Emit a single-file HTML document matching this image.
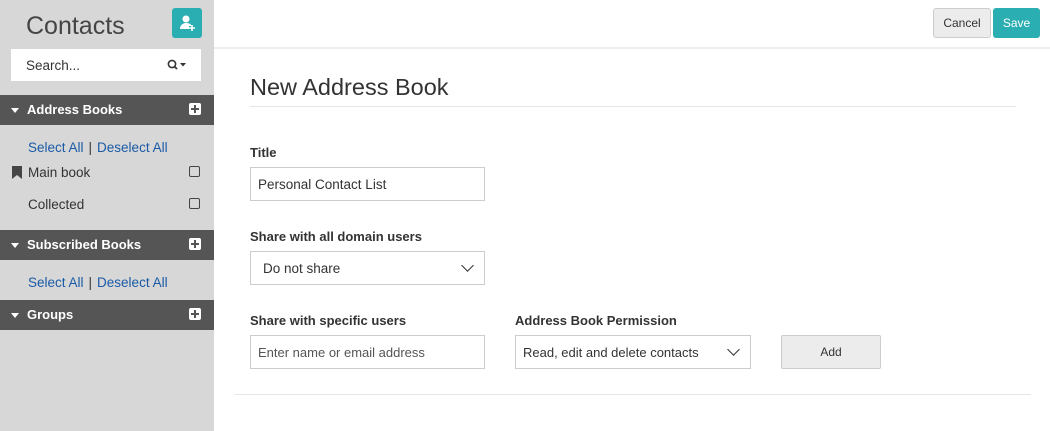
<!DOCTYPE html>
<html><head><style>
*{box-sizing:border-box;margin:0;padding:0}
body{width:1050px;height:431px;overflow:hidden;font-family:"Liberation Sans",sans-serif;background:#fff;position:relative;color:#333}
#side{position:absolute;left:0;top:0;width:214px;height:431px;background:#d7d7d7}
.abs{position:absolute}
.hdr{position:absolute;left:0;width:214px;height:30px;background:#555;color:#fff;font-weight:bold;font-size:13px;line-height:30px;padding-left:27px}
.hdr .tri{position:absolute;left:11px;top:13px;border-left:4px solid transparent;border-right:4px solid transparent;border-top:5px solid #fff}
.hdr .plus{position:absolute;left:189px;top:8px;width:12px;height:12px;background:#fff;border-radius:2px}
.hdr .plus:before{content:"";position:absolute;left:2px;top:5px;width:8px;height:2px;background:#555}
.hdr .plus:after{content:"";position:absolute;left:5px;top:2px;width:2px;height:8px;background:#555}
.sel{position:absolute;left:28px;font-size:13.5px;color:#1a5aa6}
.sel span{color:#333;margin:0 5px}
.item{position:absolute;left:28px;font-size:13.5px;color:#333}
.cb{position:absolute;left:189px;width:11px;height:11px;border:1.5px solid #444;border-radius:2px}
.lbl{position:absolute;font-size:13px;font-weight:bold;color:#333}
.inp{position:absolute;height:34px;border:1px solid #ccc;background:#fff;font-size:13.5px;line-height:33px;padding-left:7px;color:#333}
.chev{position:absolute;right:12px;top:11px;width:9px;height:9px;border-right:1.6px solid #333;border-bottom:1.6px solid #333;transform:rotate(45deg)}
</style></head><body>
<div id="side">
 <div class="abs" style="left:26px;top:12px;font-size:25px;color:#444">Contacts</div>
 <div class="abs" style="left:172px;top:8px;width:30px;height:30px;background:#2aaeb1;border-radius:3px">
  <svg width="30" height="30" viewBox="0 0 30 30"><circle cx="14" cy="11" r="3.5" fill="#fff"/><path d="M8 21c0-4 3-6 6-6s5 1 5.5 3H17v3z" fill="#fff"/><path d="M20 17v6M17 20h6" stroke="#fff" stroke-width="1.6"/></svg>
 </div>
 <div class="abs" style="left:11px;top:49px;width:190px;height:32px;background:#fff;font-size:13.5px;line-height:33px;padding-left:15px;color:#333">Search...
  <svg class="abs" style="left:156px;top:10px" width="22" height="12" viewBox="0 0 22 12"><circle cx="5" cy="5" r="3.6" fill="none" stroke="#333" stroke-width="1.6"/><path d="M7.5 7.5l2.5 2.5" stroke="#333" stroke-width="1.8"/><path d="M13 4h6l-3 3.5z" fill="#333"/></svg>
 </div>
 <div class="hdr" style="top:95px"><i class="tri"></i>Address Books<i class="plus"></i></div>
 <div class="sel" style="top:140px">Select All<span>|</span>Deselect All</div>
 <svg class="abs" style="left:12px;top:166px" width="10" height="13"><path d="M0 0h10v13l-5-4-5 4z" fill="#444"/></svg>
 <div class="item" style="top:165px">Main book</div><div class="cb" style="top:166px"></div>
 <div class="item" style="top:197px">Collected</div><div class="cb" style="top:198px"></div>
 <div class="hdr" style="top:230px"><i class="tri"></i>Subscribed Books<i class="plus"></i></div>
 <div class="sel" style="top:275px">Select All<span>|</span>Deselect All</div>
 <div class="hdr" style="top:300px"><i class="tri"></i>Groups<i class="plus"></i></div>
</div>
<div class="abs" style="left:214px;top:47px;width:836px;height:2px;background:#eee"></div>
<div class="abs" style="left:933px;top:8px;width:58px;height:30px;background:#ececec;border:1px solid #ccc;border-radius:3px;font-size:12px;line-height:29px;text-align:center;color:#333">Cancel</div>
<div class="abs" style="left:993px;top:8px;width:47px;height:30px;background:#2aaeb1;border-radius:3px;font-size:12px;line-height:31px;text-align:center;color:#fff">Save</div>
<div class="abs" style="left:250px;top:74px;font-size:23.5px;color:#333">New Address Book</div>
<div class="abs" style="left:250px;top:106px;width:766px;height:1px;background:#e5e5e5"></div>
<div class="lbl" style="left:250px;top:145px">Title</div>
<div class="inp" style="left:250px;top:167px;width:235px">Personal Contact List</div>
<div class="lbl" style="left:250px;top:229px">Share with all domain users</div>
<div class="inp" style="left:250px;top:251px;width:235px;padding-left:12px">Do not share<i class="chev" style="top:9px"></i></div>
<div class="lbl" style="left:250px;top:313px">Share with specific users</div>
<div class="inp" style="left:250px;top:335px;width:235px;color:#555;font-size:13px">Enter name or email address</div>
<div class="lbl" style="left:515px;top:313px">Address Book Permission</div>
<div class="inp" style="left:515px;top:335px;width:236px;font-size:13px">Read, edit and delete contacts<i class="chev" style="top:9px"></i></div>
<div class="abs" style="left:781px;top:335px;width:100px;height:34px;background:#ececec;border:1px solid #ccc;border-radius:2px;font-size:12px;line-height:33px;text-align:center">Add</div>
<div class="abs" style="left:235px;top:394px;width:796px;height:1px;background:#e5e5e5"></div>
</body></html>
